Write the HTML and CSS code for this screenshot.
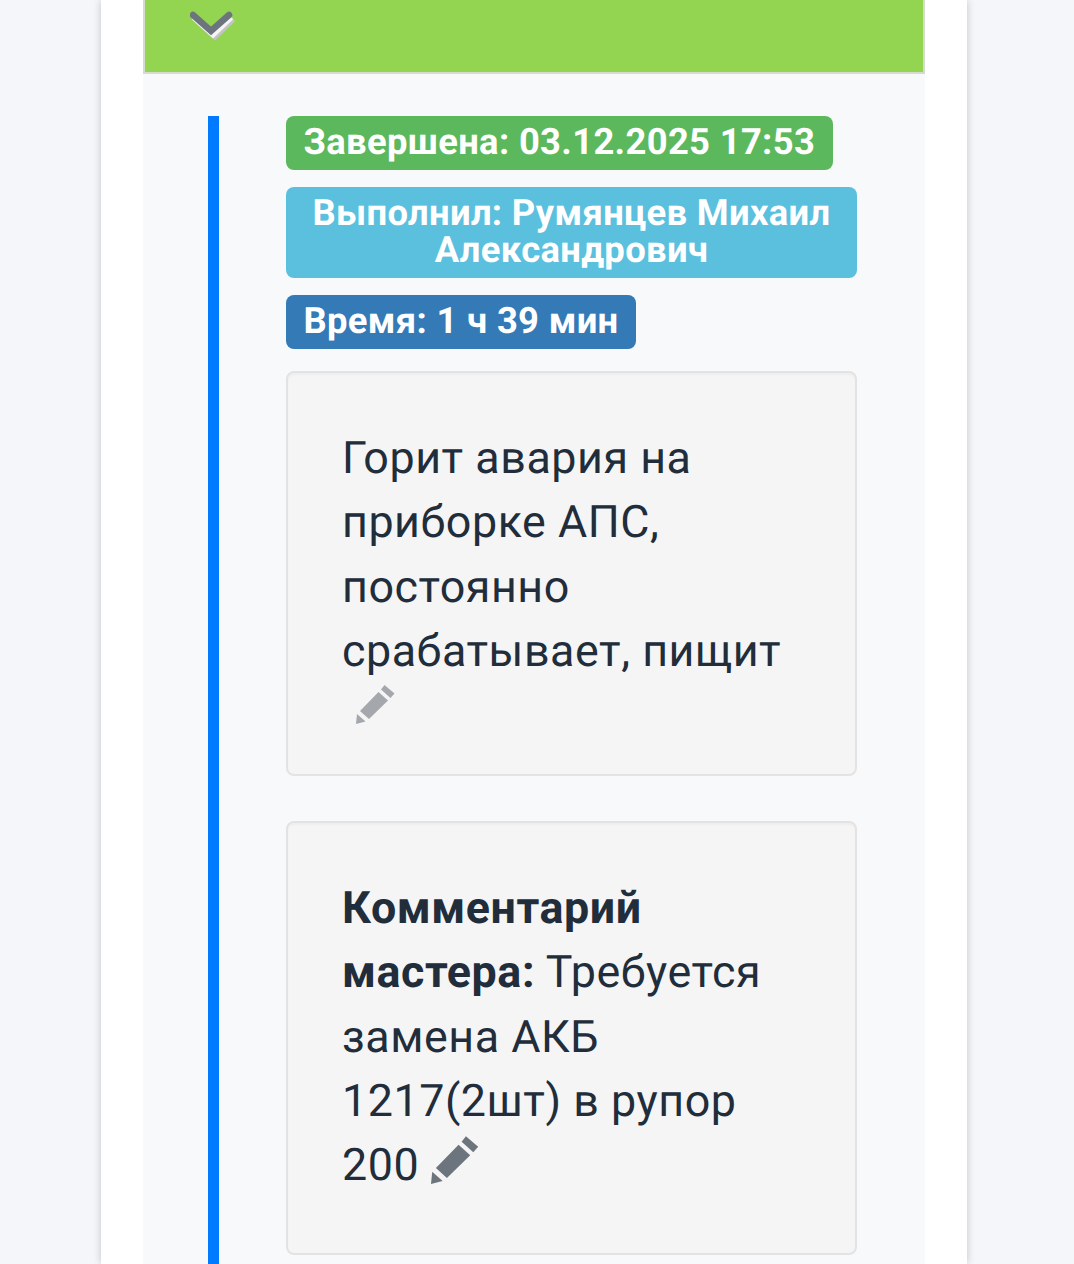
FILE: index.html
```html
<!DOCTYPE html>
<html lang="ru">
<head>
    <meta charset="UTF-8">
    <meta name="viewport" content="width=device-width, initial-scale=1.0">
    <title>Заявка</title>
    <link rel="stylesheet" href="styles.css">
</head>
<body>
    <div class="page-card">
        <div class="panel">
            <div class="panel-header">
                <svg class="chevron" width="50" height="34" viewBox="0 0 50 34">
                    <path class="chevron-far" d="M6 9 L25 26 L43 9"/>
                    <path class="chevron-near" d="M4 7 L23 24 L41 7"/>
                    <path class="chevron-main" d="M3 5 L21 21 L39 5"/>
                </svg>
            </div>
            <div class="timeline">
                <div class="timeline-body">
                    <div class="label label-success">Завершена: 03.12.2025 17:53</div>
                    <div class="label label-info">Выполнил: Румянцев Михаил Александрович</div>
                    <div class="label label-primary">Время: 1 ч 39 мин</div>

                    <div class="well">
                        Горит авария на приборке АПС, постоянно срабатывает, пищит
                        <svg class="edit-icon edit-icon-muted" width="40" height="40" viewBox="0 0 40 40">
                            <path d="M28.5 1 L38.5 9.5 L34.5 14 L25 5.5 Z"/>
                            <path d="M22.5 8 L32 16.5 L13 35 L4 27 Z"/>
                            <path d="M1 30 L9.5 37.5 L0 40 Z"/>
                        </svg>
                    </div>

                    <div class="well">
                        <b>Комментарий мастера:</b> Требуется замена АКБ 1217(2шт) в рупор 200
                        <svg class="edit-icon" width="49" height="49" viewBox="0 0 40 40">
                            <path d="M28.5 1 L38.5 9.5 L34.5 14 L25 5.5 Z"/>
                            <path d="M22.5 8 L32 16.5 L13 35 L4 27 Z"/>
                            <path d="M1 30 L9.5 37.5 L0 40 Z"/>
                        </svg>
                    </div>
                </div>
            </div>
        </div>
    </div>
</body>
</html>
```

FILE: styles.css
```css
html, body {
    height: 1264px;
    overflow: hidden;
}

body {
    margin: 0;
    background-color: #f4f6f9;
    font-family: Roboto, "Liberation Sans", sans-serif;
    color: #212d3b;
    text-rendering: geometricPrecision;
}

/* White page column */
.page-card {
    width: 866px;
    height: 1264px;
    margin-left: 101px;
    padding: 0 42px;
    box-sizing: border-box;
    background-color: #fff;
    box-shadow: 0 0 8px rgba(0, 0, 0, 0.2);
}

.panel {
    height: 1264px;
    background-color: #f8f9fa;
}

/* Green header */
.panel-header {
    height: 74px;
    box-sizing: border-box;
    padding: 10px 0 0 45px;
    background-color: #93d450;
    border: 2px solid #d5dccf;
    border-top: none;
}

.chevron {
    display: block;
    fill: none;
    stroke-linejoin: miter;
}

.chevron-main {
    stroke: #6c757d;
    stroke-width: 6.5;
    stroke-linecap: round;
}

.chevron-near {
    stroke: #f4f5f4;
    stroke-width: 6.5;
}

.chevron-far {
    stroke: #c2c4c2;
    stroke-width: 6.5;
}

/* Timeline with the blue bar */
.timeline {
    margin: 42px 0 0 65px;
    height: 1148px;
    border-left: 11px solid #007bff;
}

.timeline-body {
    width: 571px;
    margin-left: 67px;
}

.label {
    width: fit-content;
    box-sizing: border-box;
    max-width: 100%;
    padding: 7px 17.5px 10px;
    margin-bottom: 17px;
    border-radius: 8px;
    color: #fff;
    font-size: 36.4px;
    font-weight: 700;
    line-height: 37px;
    letter-spacing: 0.33px;
    text-align: center;
}

.label-success {
    background-color: #5cb85c;
}

.label-info {
    background-color: #5bc0de;
}

.label-primary {
    margin-bottom: 22px;
    background-color: #337ab7;
}

/* Grey boxes with the text */
.well {
    padding: 53px 54px 55px;
    margin-bottom: 45px;
    background-color: #f5f5f6;
    border: 2px solid #e3e3e3;
    border-radius: 8px;
    box-shadow: inset 0 2px 2px rgba(0, 0, 0, 0.03);
    font-size: 44.8px;
    line-height: 64.3px;
    letter-spacing: 0.55px;
}

.edit-icon {
    fill: #6c757d;
    vertical-align: -4px;
}

/* This one sits on its own short line under the text */
.edit-icon-muted {
    display: block;
    fill: #a4a7ab;
    margin: 1px 0 -5px 14px;
}
```
